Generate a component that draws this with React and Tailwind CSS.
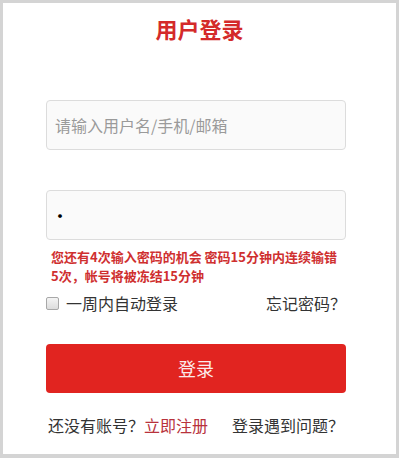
import React from 'react';

const font = { fontFamily: '"Noto Sans CJK SC", "Noto Sans", sans-serif' };

export default function App() {
  return (
    <div className="w-[399px] h-[458px] bg-[#d4d4d4] p-[3px] pb-[4px]" style={font}>
      <div className="h-full bg-white pt-[10px]">
        <h1 className="text-center text-[22px] leading-[30px] font-bold text-[#d42a2a]">用户登录</h1>

        <div className="ml-[43px] w-[300px] mt-[57px]">
          <input
            type="text"
            placeholder="请输入用户名/手机/邮箱"
            className="block w-full h-[50px] rounded-[4px] border border-[#dcdcdc] bg-[#fafafa] px-[8px] text-[16px] text-[#333] placeholder:text-[#9a9a9a] outline-none"
          />
          <input
            type="password"
            defaultValue="1"
            className="block w-full h-[50px] mt-[40px] rounded-[4px] border border-[#dcdcdc] bg-[#fafafa] px-[4px] text-[18px] text-black outline-none"
          />

          <p className="mt-[7px] px-[5px] text-[13px] leading-[19px] font-bold text-[#cf2f2f]">
            您还有4次输入密码的机会 密码15分钟内连续输错5次，帐号将被冻结15分钟
          </p>

          <div className="mt-[6px] h-[24px] flex items-center justify-between text-[16px] text-[#333]">
            <label className="flex items-center">
              <span className="w-[13px] h-[13px] rounded-[2px] border border-[#a8a8a8] bg-gradient-to-b from-[#f4f4f4] to-[#dcdcdc]" />
              <span className="ml-[7px]">一周内自动登录</span>
            </label>
            <span>忘记密码？</span>
          </div>

          <button className="mt-[29px] w-full h-[49px] rounded-[4px] bg-[#e12420] text-[18px] text-[#fbeaea]">
            登录
          </button>

          <div className="mt-[20px] h-[24px] flex items-center text-[16px] text-[#333]">
            <span className="ml-[2px]">还没有账号？</span>
            <span className="text-[#b8323c]">立即注册</span>
            <span className="ml-[24px]">登录遇到问题？</span>
          </div>
        </div>
      </div>
    </div>
  );
}
